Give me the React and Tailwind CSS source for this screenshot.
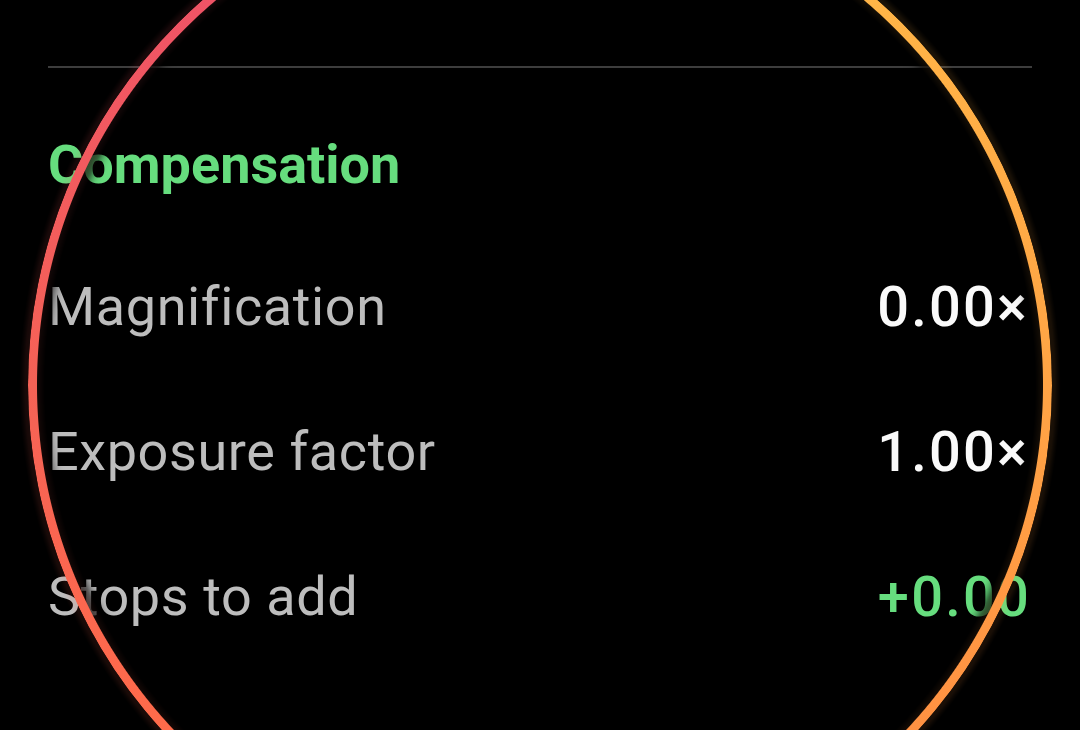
import React from "react";

const rows = [
  { label: "Magnification", value: "0.00×", green: false },
  { label: "Exposure factor", value: "1.00×", green: false },
  { label: "Stops to add", value: "+0.00", green: true },
];

export default function App() {
  return (
    <div className="relative w-[1080px] h-[730px] overflow-hidden bg-black font-['Roboto',sans-serif]">
      <div className="flex flex-col px-[48px]">
        <div className="mt-[66px] h-[2px] bg-[#3d3d3d]" />
        <div className="mt-[65px] text-[54px] leading-[64px] font-bold text-[#66dd7e]">
          Compensation
        </div>
        <div className="mt-[78px] flex flex-col gap-[81px]">
          {rows.map((r) => (
            <div key={r.label} className="flex items-center justify-between leading-[64px]">
              <span className="text-[54px] tracking-[0.6px] text-[#bdbdbd]">{r.label}</span>
              <span
                className={
                  r.green
                    ? "text-[56px] tracking-[2.2px] font-medium text-[#66dd7e] pr-[1px]"
                    : "text-[56px] tracking-[2.2px] font-medium text-[#fafafa] pr-[3px]"
                }
              >
                {r.value}
              </span>
            </div>
          ))}
        </div>
      </div>

      {/* dark halo */}
      <div className="pointer-events-none absolute left-[29px] top-[-126px] w-[1022px] h-[1022px] rounded-full [mask-image:radial-gradient(farthest-side,transparent_calc(100%_-_30px),#000_calc(100%_-_14px),#000_calc(100%_-_2px),transparent_100%)]">
        <div className="absolute inset-[-10px] rounded-full border-[28px] border-black/70 blur-[6px]" />
      </div>
      {/* colored glow */}
      <div className="pointer-events-none absolute left-[19px] top-[-136px] w-[1042px] h-[1042px] rounded-full opacity-[0.12] blur-[8px] [background:conic-gradient(#ffc04a,#ffb547_40deg,#ffa445_90deg,#ff9142_133deg,#ff7e46_180deg,#ff6b4a_227deg,#f56256_270deg,#ef5366_320deg,#ee4f6a)] [mask-image:radial-gradient(farthest-side,transparent_calc(100%_-_26px),#000_calc(100%_-_14px),#000_calc(100%_-_6px),transparent_100%)]" />
      {/* ring */}
      <div className="pointer-events-none absolute left-[28px] top-[-127px] w-[1024px] h-[1024px] rounded-full [background:conic-gradient(#ffc04a,#ffb547_40deg,#ffa445_90deg,#ff9142_133deg,#ff7e46_180deg,#ff6b4a_227deg,#f56256_270deg,#ef5366_320deg,#ee4f6a)] [mask-image:radial-gradient(farthest-side,transparent_calc(100%_-_9.5px),#000_calc(100%_-_8.5px))]" />
    </div>
  );
}
